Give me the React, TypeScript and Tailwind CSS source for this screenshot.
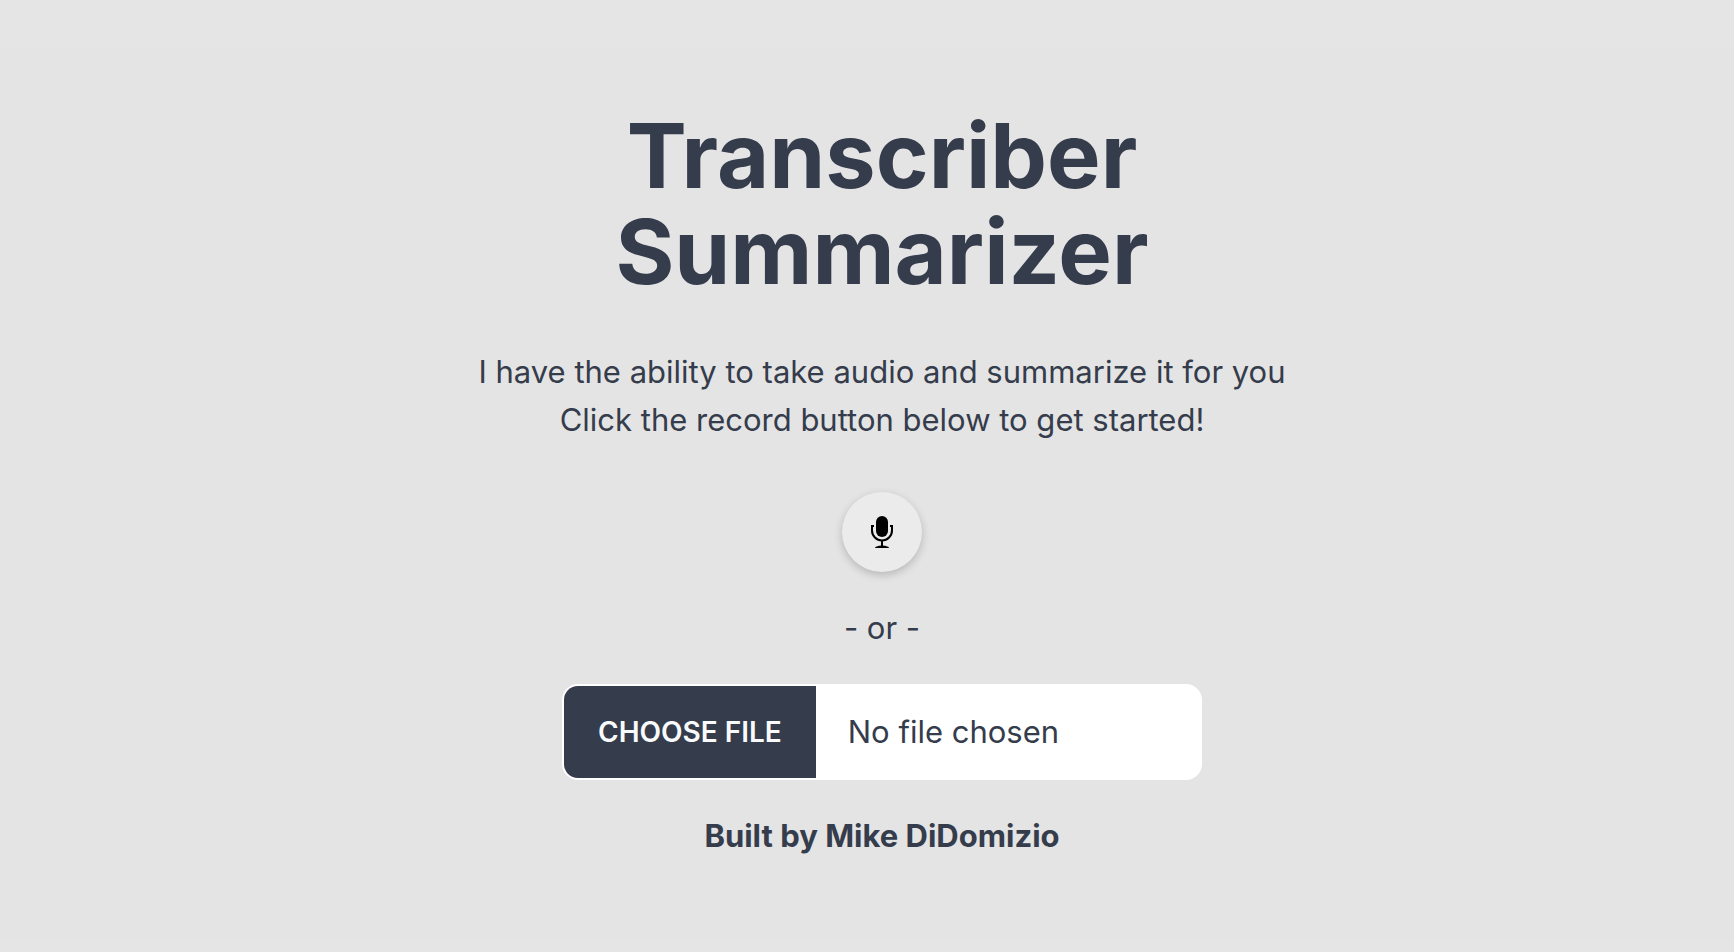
export default function App() {
  return (
    <div className="flex min-h-screen flex-col bg-[#e5e5e5] pt-12 pb-[11px] font-[Inter,sans-serif] text-[#353c4c]">
      <main className="flex grow flex-col items-center bg-[#e4e4e4] pt-15 pl-[30px] text-center">
        <h1 className="text-[90px] leading-24 font-bold">
          Transcriber
          <br />
          Summarizer
        </h1>
        <p className="pt-12 text-[31px] leading-12">
          I have the ability to take audio and summarize it for you
          <br />
          Click the record button below to get started!
        </p>
        <button
          type="button"
          aria-label="Record"
          className="mt-12 flex size-20 items-center justify-center rounded-full bg-[#ebebeb] text-black shadow-[0_3px_8px_rgba(0,0,0,0.2)]"
        >
          <svg viewBox="0 0 24 34" className="h-[34px] w-6" aria-hidden="true">
            <rect x="6" y="1" width="12" height="21" rx="6" fill="currentColor" />
            <path
              d="M4 11H2v4.500a10 10 0 0 0 20 0V11h-2M12 26v5"
              fill="none"
              stroke="currentColor"
              strokeWidth="2"
            />
            <path d="M5 33Q5 31 12 30.500Q19 31 19 33Z" fill="currentColor" />
          </svg>
        </button>
        <p className="pt-8 text-[31px] leading-12">- or -</p>
        <input
          type="file"
          aria-label="Audio file"
          className="mt-8 h-24 w-full max-w-[640px] overflow-hidden rounded-2xl border-2 border-white bg-white text-[31px] leading-[92px] file:mr-8 file:h-full file:bg-[#353c4c] file:px-[34px] file:align-top file:text-[28px] file:font-semibold file:text-[#f9fafb] file:uppercase"
        />
        <p className="pt-8 text-[31px] leading-12 font-bold">Built by Mike DiDomizio</p>
      </main>
    </div>
  );
}
